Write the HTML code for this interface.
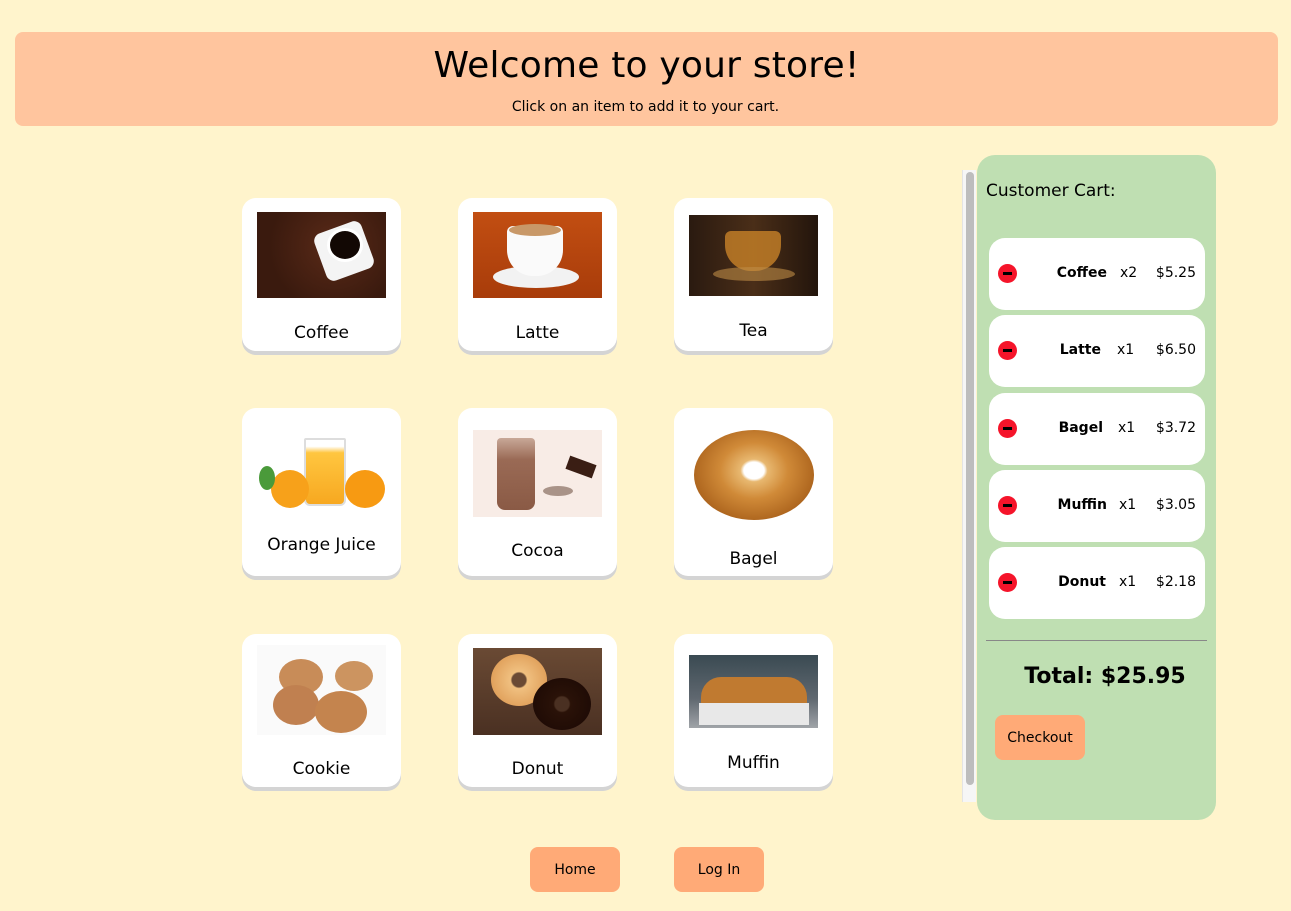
<!DOCTYPE html>
<html><head><meta charset="utf-8"><style>
*{margin:0;padding:0;box-sizing:border-box}
body{width:1291px;height:911px;background:#fff4cc;font-family:"DejaVu Sans","Liberation Sans",sans-serif;position:relative;overflow:hidden;color:#000}
.abs{position:absolute}
.hdr{left:15px;top:32px;width:1263px;height:94px;background:#ffc59e;border-radius:8px;text-align:center}
.hdr h1{font-weight:normal;font-size:36px;position:absolute;top:13px;width:100%;letter-spacing:0.2px}
.card{width:159px;background:#fff;border-radius:14px;box-shadow:0 4px 0 #d4d4d4}
.card .img{position:absolute;left:15px;width:129px}
.card .lbl{position:absolute;width:100%;text-align:center;font-size:17px}
.cart{left:977px;top:155px;width:239px;height:665px;background:#bfdfb2;border-radius:18px}
.track{left:962px;top:170px;width:14px;height:632px;background:#f6f6f6;border-left:1px solid #e4e4e4}
.thumb{left:966px;top:172px;width:8px;height:613px;background:#bdbdbd;border-radius:4px}
.item{left:989px;width:216px;height:72px;background:#fff;border-radius:16px;font-size:14px}
.item .m{position:absolute;left:9px;top:26px;width:19px;height:19px;border-radius:50%;background:#f5142a}
.item .m:after{content:"";position:absolute;left:5px;top:8px;width:9px;height:3px;background:#000}
.item .n{position:absolute;right:98px;top:27px;font-weight:bold}
.item .q{position:absolute;left:131px;top:27px}
.item .p{position:absolute;right:9px;top:27px}
.btn{background:#ffaa77;border-radius:8px;width:90px;height:45px;font-size:14px;text-align:center;line-height:47px}
</style></head><body>
<div class="abs hdr"><h1>Welcome to your store!</h1></div>
<div class="abs" style="left:0;top:99px;width:1291px;text-align:center;font-size:14px">Click on an item to add it to your cart.</div>

<div class="abs card" style="left:242px;top:198px;height:153px">
 <div class="img" style="top:14px;height:86px;background:radial-gradient(circle at 60% 40%,#5a2a18,#3a1a0e 70%)"><div class="abs" style="left:62px;top:14px;width:50px;height:50px;background:#f4f4f4;border-radius:8px;transform:rotate(-20deg)"></div><div class="abs" style="left:70px;top:16px;width:36px;height:34px;border-radius:50%;background:#120804;border:3px solid #fff"></div></div>
 <div class="lbl" style="top:125px">Coffee</div></div>
<div class="abs card" style="left:458px;top:198px;height:153px">
 <div class="img" style="top:14px;height:86px;background:linear-gradient(#c24e12,#a83c0a)"><div class="abs" style="left:20px;top:54px;width:86px;height:22px;border-radius:50%;background:#f2f2f2"></div><div class="abs" style="left:34px;top:14px;width:56px;height:50px;border-radius:6px 6px 26px 26px;background:#fafafa"></div><div class="abs" style="left:36px;top:12px;width:52px;height:12px;border-radius:50%;background:#c89868"></div></div>
 <div class="lbl" style="top:125px">Latte</div></div>
<div class="abs card" style="left:674px;top:198px;height:153px">
 <div class="img" style="top:17px;height:81px;background:linear-gradient(90deg,#2a1a10,#4a2e18 50%,#23150c)"><div class="abs" style="left:36px;top:16px;width:56px;height:40px;border-radius:6px 6px 26px 26px;background:rgba(200,130,40,.8)"></div><div class="abs" style="left:24px;top:52px;width:82px;height:14px;border-radius:50%;background:rgba(190,140,70,.6)"></div></div>
 <div class="lbl" style="top:123px">Tea</div></div>
<div class="abs card" style="left:242px;top:408px;height:168px">
 <div class="img" style="top:22px;height:85px;background:#fff"><div class="abs" style="left:47px;top:8px;width:42px;height:68px;background:linear-gradient(#fff 0,#fff 10%,#ffc640 20%,#f7a820);border:2px solid #ddd;border-radius:2px 2px 6px 6px"></div><div class="abs" style="left:14px;top:40px;width:38px;height:38px;border-radius:50%;background:#f7a11a"></div><div class="abs" style="left:88px;top:40px;width:40px;height:38px;border-radius:50%;background:#f79a12"></div><div class="abs" style="left:2px;top:36px;width:16px;height:24px;background:#4a9a3a;border-radius:50%"></div></div>
 <div class="lbl" style="top:127px">Orange Juice</div></div>
<div class="abs card" style="left:458px;top:408px;height:168px">
 <div class="img" style="top:22px;height:87px;background:#f8ece6"><div class="abs" style="left:24px;top:8px;width:38px;height:72px;background:linear-gradient(#c8a898,#9a6a55 30%,#8a5a45);border-radius:4px 4px 8px 8px"></div><div class="abs" style="left:94px;top:30px;width:28px;height:14px;background:#3a1e14;transform:rotate(20deg)"></div><div class="abs" style="left:70px;top:56px;width:30px;height:10px;background:#5a3a2a;opacity:.5;border-radius:50%"></div></div>
 <div class="lbl" style="top:133px">Cocoa</div></div>
<div class="abs card" style="left:674px;top:408px;height:168px">
 <div class="img" style="top:18px;height:96px;background:#fff"><div class="abs" style="left:5px;top:4px;width:120px;height:90px;border-radius:50%;background:radial-gradient(ellipse at 50% 45%,#fff 0,#fff 12%,#e8b870 16%,#d08a38 40%,#b06820 70%,#8a4a14)"></div></div>
 <div class="lbl" style="top:141px">Bagel</div></div>
<div class="abs card" style="left:242px;top:634px;height:153px">
 <div class="img" style="top:11px;height:90px;background:#fafafa"><div class="abs" style="left:22px;top:14px;width:44px;height:36px;border-radius:50%;background:#c88c58"></div><div class="abs" style="left:16px;top:40px;width:46px;height:40px;border-radius:50%;background:#c08050"></div><div class="abs" style="left:58px;top:46px;width:52px;height:42px;border-radius:50%;background:#c4844e"></div><div class="abs" style="left:78px;top:16px;width:38px;height:30px;border-radius:50%;background:#cc9460"></div></div>
 <div class="lbl" style="top:125px">Cookie</div></div>
<div class="abs card" style="left:458px;top:634px;height:153px">
 <div class="img" style="top:14px;height:87px;background:linear-gradient(#6a4a34,#4a3022)"><div class="abs" style="left:18px;top:6px;width:56px;height:52px;border-radius:50%;background:radial-gradient(circle,#6a4a34 0,#6a4a34 18%,#f0c080 22%,#d89048)"></div><div class="abs" style="left:60px;top:30px;width:58px;height:52px;border-radius:50%;background:radial-gradient(circle,#4a3022 0,#4a3022 18%,#2a1208 22%,#1a0804)"></div></div>
 <div class="lbl" style="top:125px">Donut</div></div>
<div class="abs card" style="left:674px;top:634px;height:153px">
 <div class="img" style="top:21px;height:73px;background:linear-gradient(#3a4a52,#606870 60%,#a0a4a8)"><div class="abs" style="left:12px;top:22px;width:106px;height:30px;border-radius:20px 20px 4px 4px;background:#c07a30"></div><div class="abs" style="left:10px;top:48px;width:110px;height:22px;background:#e8e8e8"></div></div>
 <div class="lbl" style="top:119px">Muffin</div></div>

<div class="abs track"></div><div class="abs thumb"></div>
<div class="abs cart"></div>
<div class="abs" style="left:986px;top:181px;font-size:17px">Customer Cart:</div>
<div class="abs item" style="top:238px"><div class="m"></div><div class="n">Coffee</div><div class="q">x2</div><div class="p">$5.25</div></div>
<div class="abs item" style="top:315px"><div class="m"></div><div class="n" style="right:104px">Latte</div><div class="q" style="left:128px">x1</div><div class="p">$6.50</div></div>
<div class="abs item" style="top:393px"><div class="m"></div><div class="n" style="right:102px">Bagel</div><div class="q" style="left:129px">x1</div><div class="p">$3.72</div></div>
<div class="abs item" style="top:470px"><div class="m"></div><div class="n">Muffin</div><div class="q" style="left:130px">x1</div><div class="p">$3.05</div></div>
<div class="abs item" style="top:547px"><div class="m"></div><div class="n" style="right:99px">Donut</div><div class="q" style="left:130px">x1</div><div class="p">$2.18</div></div>
<div class="abs" style="left:986px;top:640px;width:221px;height:1px;background:#888"></div>
<div class="abs" style="left:977px;top:664px;width:256px;text-align:center;font-size:22px;font-weight:bold">Total: $25.95</div>
<div class="abs btn" style="left:995px;top:715px">Checkout</div>
<div class="abs btn" style="left:530px;top:847px">Home</div>
<div class="abs btn" style="left:674px;top:847px">Log In</div>
</body></html>
